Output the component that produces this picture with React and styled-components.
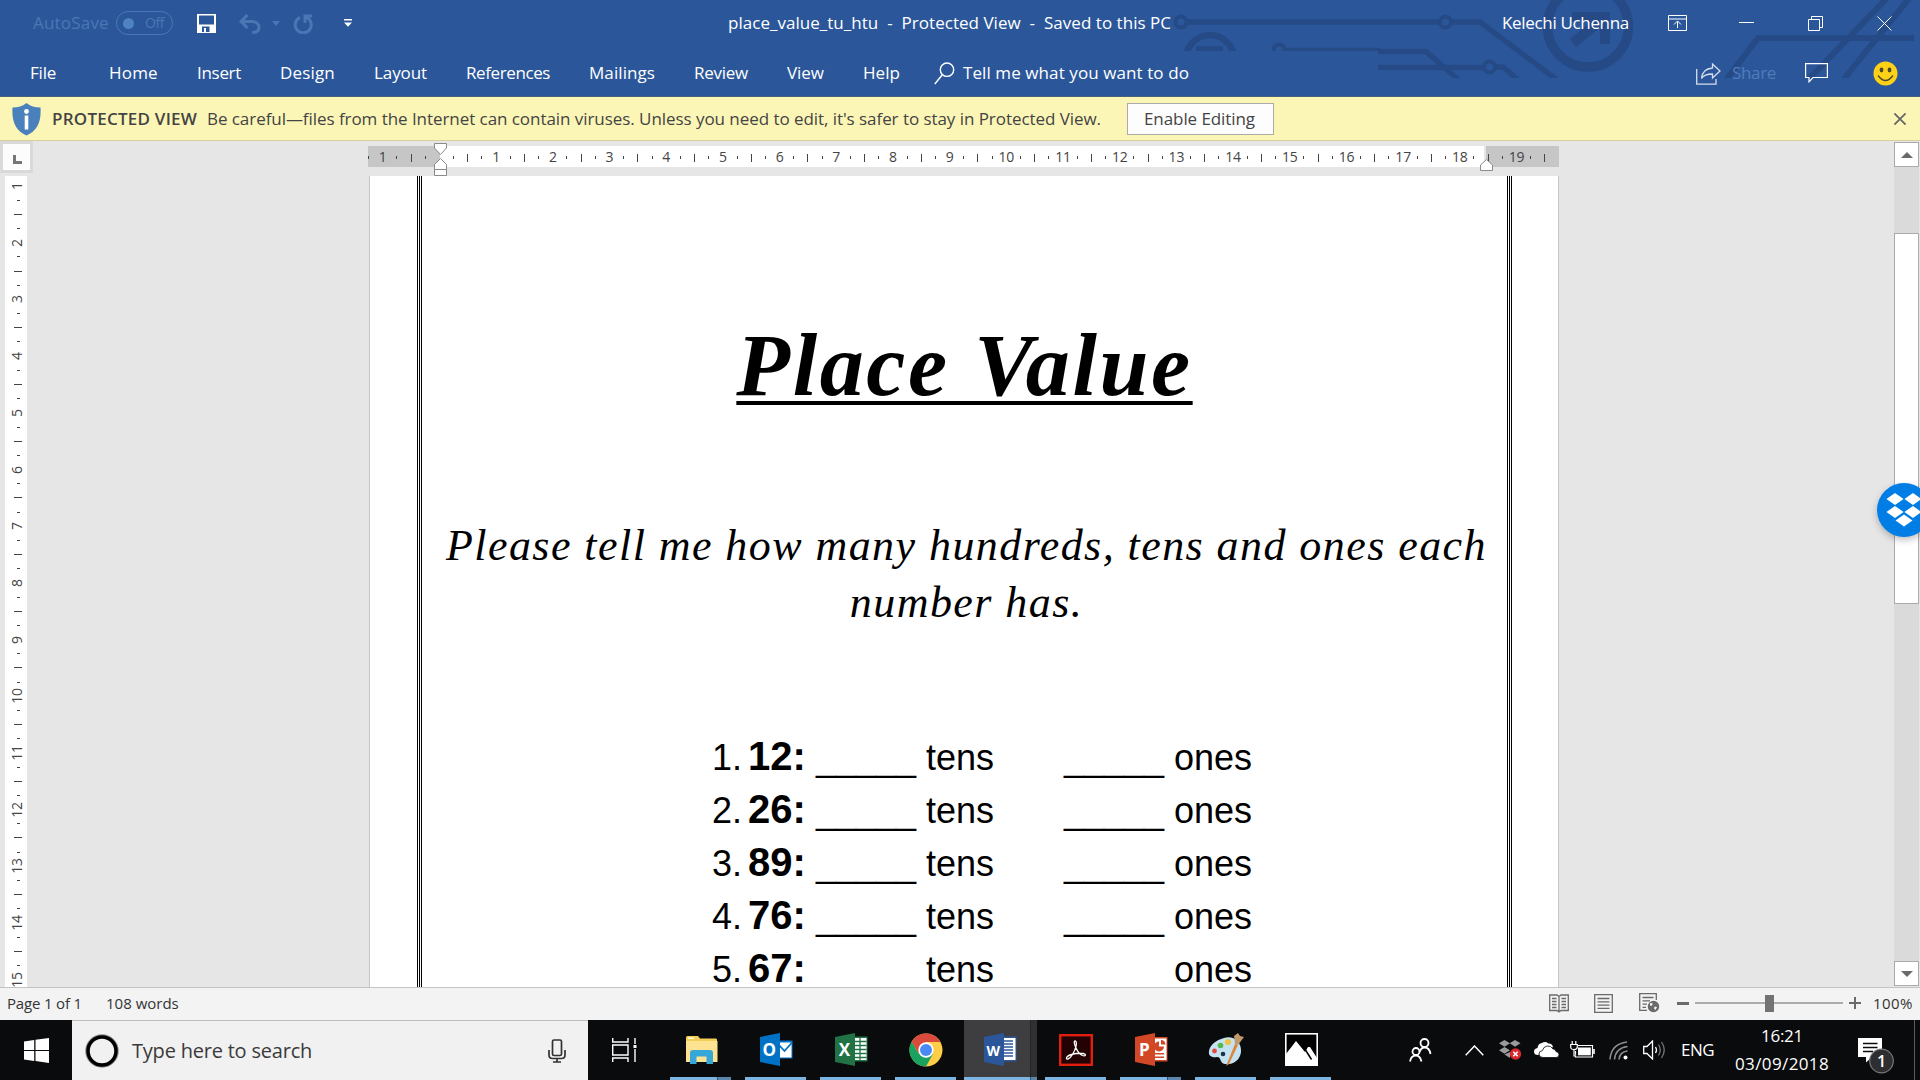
import React from "react";
import styled, { createGlobalStyle, css } from "styled-components";

const GlobalStyle = createGlobalStyle`
  *, *::before, *::after { box-sizing: border-box; }
  html, body { margin: 0; padding: 0; overflow: hidden; }
  body { font-family: "Segoe UI", "Open Sans", "Noto Sans", sans-serif; }
  svg { display: block; flex: none; }
`;

const Screen = styled.div`
  width: 1920px;
  height: 1080px;
  display: flex;
  flex-direction: column;
  overflow: hidden;
  background: #e6e6e6;
`;

/* Text run with a fixed box so neighbouring items never drift */
const Label = styled.span`
  flex: none;
  width: ${(p) => p.$w}px;
  margin-left: ${(p) => p.$gap || 0}px;
  font-size: ${(p) => p.$size || 17}px;
  letter-spacing: ${(p) => p.$ls || 0}px;
  font-weight: ${(p) => p.$weight || 400};
  color: ${(p) => p.$color || "inherit"};
  white-space: pre;
  line-height: ${(p) => p.$lh || 1.4};
`;

const IconSlot = styled.span`
  flex: none;
  display: flex;
  margin-left: ${(p) => p.$gap || 0}px;
  padding-top: ${(p) => p.$drop || 0}px;
`;

/* ---------- header ---------- */
const Header = styled.header`
  position: relative;
  flex: none;
  height: 97px;
  background: #2b579a;
  border-bottom: 1px solid #48607a;
  color: #fff;
`;

const Decor = styled.svg`
  position: absolute;
  left: 1160px;
  top: 0;
`;

const TitleRow = styled.div`
  position: relative;
  display: flex;
  align-items: center;
  height: 46px;
`;

const TabRow = styled.nav`
  position: relative;
  display: flex;
  align-items: center;
  height: 50px;
  padding-top: 4px;
`;

const Toggle = styled.span`
  flex: none;
  display: flex;
  align-items: center;
  width: 57px;
  height: 24px;
  margin-left: 7px;
  padding-left: 6px;
  border: 1px solid #4a77b4;
  border-radius: 12px;
`;

const ToggleDot = styled.span`
  width: 11px;
  height: 11px;
  border-radius: 50%;
  background: #4f83c0;
`;

/* ---------- message bar ---------- */
const MessageBar = styled.div`
  flex: none;
  display: flex;
  align-items: center;
  height: 44px;
  background: #fcf6b6;
  border-bottom: 1px solid #d5d09c;
  color: #444;
`;

const EnableButton = styled.button`
  flex: none;
  display: flex;
  align-items: center;
  width: 147px;
  height: 32px;
  margin-left: 26px;
  padding: 0 0 0 16px;
  border: 1px solid #ababab;
  background: #fdfdfd;
  color: #444;
  font-family: inherit;
`;

/* ---------- workspace ---------- */
const Workspace = styled.main`
  flex: none;
  display: flex;
  height: 847px;
  border-bottom: 1px solid #c3c3c3;
  background: #e6e6e6;
`;

const LeftRail = styled.div`
  display: flex;
  flex-direction: column;
  width: 33px;
`;

const TabSelector = styled.div`
  flex: none;
  height: 32px;
  padding: 3px;
  background: #d9d9d9;
`;

const TabSelectorFace = styled.div`
  display: flex;
  width: 27px;
  height: 26px;
  padding: 11px 0 0 10px;
  background: #fcfcfc;
`;

const VRuler = styled.div`
  flex: 1;
  width: 22px;
  margin: 3px 0 0 5px;
  padding-top: 3px;
  background: #fff;
  overflow: hidden;
`;

const VTick = styled.div`
  display: flex;
  align-items: center;
  justify-content: center;
  height: 14.175px;
  padding-left: 3px;
`;

const VNumber = styled.span`
  transform: rotate(-90deg);
  font-size: 14px;
  line-height: 14px;
  letter-spacing: ${(p) => (p.$wide ? "-0.3px" : 0)};
  margin-left: -1px;
  color: #444;
`;

const VMark = styled.span`
  width: ${(p) => (p.$long ? 8 : 3)}px;
  height: 1px;
  margin-left: ${(p) => (p.$long ? 0 : 1)}px;
  background: #444;
`;

const Canvas = styled.div`
  flex: 1;
  display: flex;
  flex-direction: column;
  padding: 5px 0 0 335px;
`;

const HRulerWrap = styled.div`
  position: relative;
  flex: none;
  width: 1191px;
  height: 21px;
  margin-bottom: 9px;
`;

const HRuler = styled.div`
  display: flex;
  height: 21px;
  overflow: hidden;
  background: linear-gradient(
    90deg,
    #c6c6c6 0 72px,
    #fff 72px 1116px,
    #e6e6e6 1116px 1118px,
    #c6c6c6 1118px
  );
`;

const HTick = styled.div`
  flex: none;
  display: flex;
  align-items: center;
  justify-content: center;
  width: 14.175px;
  padding-top: 1px;
  &:first-child { margin-left: -6.5px; }
`;

const HNumber = styled.span`
  font-size: 14px;
  line-height: 20px;
  letter-spacing: -0.2px;
  color: #444;
  white-space: nowrap;
`;

const HMark = styled.span`
  width: 1px;
  height: ${(p) => (p.$long ? 8 : 3)}px;
  margin-top: ${(p) => (p.$long ? 2 : 1)}px;
  background: #444;
`;

const Marker = styled.svg`
  position: absolute;
  left: ${(p) => p.$x}px;
  top: ${(p) => p.$y}px;
`;

const Page = styled.article`
  flex: 1;
  width: 1190px;
  margin-left: 1px;
  padding-left: 47px;
  min-height: 0;
  overflow: hidden;
  border-left: 1px solid #c6c6c6;
  border-right: 1px solid #c6c6c6;
  background: #fff;
  color: #000;
`;

const rule = css`linear-gradient(90deg, #000 0 1px, #fff 1px 2px, #000 2px 3px, #fff 3px 4px, #000 4px 5px)`;

const PageFrame = styled.div`
  width: 1095px;
  height: 840px;
  padding-top: 140px;
  background: ${rule} left top / 5px 100% no-repeat, ${rule} right top / 5px 100% no-repeat;
`;

const DocTitle = styled.h1`
  margin: 0 0 101px;
  text-align: center;
  font: italic 700 88px/100px "Lucida Calligraphy", "Liberation Serif", serif;
  letter-spacing: 2.6px;
  text-decoration: underline;
  text-decoration-thickness: 4px;
  text-underline-offset: 6px;
  text-decoration-skip-ink: none;
`;

const Instruction = styled.p`
  margin: 0 0 99px;
  padding-left: 4px;
  text-align: center;
  font: italic 400 44px/57px "Lucida Calligraphy", "Liberation Serif", serif;
  letter-spacing: 1.44px;
  white-space: pre-line;
`;

const Questions = styled.div`
  display: flex;
  flex-direction: column;
  padding-left: 295px;
  font-family: Arial, "Liberation Sans", sans-serif;
`;

const Question = styled.div`
  display: flex;
  align-items: baseline;
  height: 53px;
  font-size: 36px;
  line-height: 53px;
`;

const Cell = styled.span`
  flex: none;
  width: ${(p) => p.$w}px;
  font-size: ${(p) => (p.$bold ? 40 : 36)}px;
  font-weight: ${(p) => (p.$bold ? 700 : 400)};
`;

const Blank = styled(Cell)`
  transform: translateY(1px);
`;

/* ---------- scroll bar ---------- */
const ScrollBar = styled.div`
  display: flex;
  flex-direction: column;
  width: 26px;
  padding: 1px 1px 1px 0;
`;

const ScrollButton = styled.div`
  flex: none;
  display: flex;
  align-items: center;
  justify-content: center;
  height: 25px;
  border: 1px solid #ababab;
  background: #fff;
`;

const ScrollTrack = styled.div`
  flex: 1;
  padding-top: 66px;
  background: #dadada;
`;

const ScrollThumb = styled.div`
  height: 371px;
  border: 1px solid #ababab;
  background: #fff;
`;

const DropboxBadge = styled.div`
  position: absolute;
  left: 1877px;
  top: 483px;
  display: flex;
  align-items: center;
  justify-content: center;
  width: 54px;
  height: 54px;
  border-radius: 50%;
  background: #007ee5;
  box-shadow: 0 3px 7px rgba(0, 0, 0, 0.25);
`;

const BadgeClip = styled.div`
  position: absolute;
  left: 0;
  top: 0;
  width: 1920px;
  height: 1080px;
  overflow: hidden;
  pointer-events: none;
`;

/* ---------- status bar ---------- */
const StatusBar = styled.footer`
  flex: none;
  display: flex;
  align-items: center;
  height: 32px;
  padding-bottom: 2px;
  background: #f3f3f3;
  color: #333;
`;

const Spacer = styled.span`
  flex: 1;
`;

const Slider = styled.span`
  flex: none;
  display: flex;
  align-items: center;
  justify-content: center;
  width: 148px;
  height: 18px;
  margin: 0 6px;
  background: linear-gradient(#ababab, #ababab) center / 100% 2px no-repeat;
`;

const SliderThumb = styled.span`
  width: 9px;
  height: 17px;
  background: #737373;
`;

/* ---------- task bar ---------- */
const TaskBar = styled.div`
  flex: none;
  display: flex;
  height: 60px;
  background: #0a0b0d;
  color: #fff;
`;

const StartButton = styled.div`
  flex: none;
  display: flex;
  align-items: center;
  width: 72px;
  padding-left: 24px;
`;

const SearchBox = styled.div`
  flex: none;
  display: flex;
  align-items: center;
  width: 516px;
  padding-left: 13px;
  border-top: 1px solid #bdbdbd;
  background: #f1f1f1;
  color: #3a3a3a;
`;

const TaskItem = styled.div`
  flex: none;
  display: flex;
  flex-direction: column;
  align-items: center;
  width: 75px;
`;

const TaskIcon = styled.div`
  flex: 1;
  display: flex;
  align-items: center;
  justify-content: center;
  width: ${(p) => (p.$active ? 73 : 61)}px;
  padding: 2px ${(p) => (p.$active ? 1 : 0)}px 0 ${(p) => (p.$active ? 0 : 1)}px;
  background: ${(p) =>
    p.$active
      ? "linear-gradient(90deg, #3e3e40 0 66px, #242426 66px 67px, #303032 67px)"
      : "none"};
`;

const TaskLine = styled.div`
  flex: none;
  width: ${(p) => (p.$active ? 73 : 61)}px;
  height: 3px;
  background: ${(p) =>
    p.$stack
      ? `linear-gradient(90deg, #7cb4e2 0 ${p.$active ? 66 : 47}px, #36506a ${p.$active ? 66 : 47}px ${p.$active ? 67 : 48}px, #5a86ae ${p.$active ? 67 : 48}px)`
      : "#7cb4e2"};
`;

const TaskViewButton = styled.div`
  flex: none;
  display: flex;
  align-items: center;
  width: 75px;
  padding-left: 24px;
`;

const Tray = styled.div`
  flex: 1;
  display: flex;
  align-items: center;
`;

const Clock = styled.div`
  flex: none;
  display: flex;
  flex-direction: column;
  align-items: center;
  width: 94px;
  margin-left: 21px;
`;

const DesktopEdge = styled.span`
  flex: none;
  width: 1px;
  height: 60px;
  margin-left: 20px;
  background: #5d5d5f;
`;

/* ---------- drawings ---------- */
const CircuitDecor = () => (
  <Decor width="760" height="78" viewBox="1160 0 760 78" fill="none" stroke="#264a86" strokeWidth="5.5">
    <circle cx="1181" cy="22" r="5.5" strokeWidth="4" />
    <path d="M1187 22H1439" />
    <circle cx="1445.5" cy="22" r="5.5" strokeWidth="4" />
    <path d="M1452 22H1480L1557 80" />
    <g clipPath="url(#upper)">
      <circle cx="1210" cy="59" r="24" strokeWidth="6.5" />
      <path d="M1196 49H1223" />
      <circle cx="1279" cy="50" r="5.5" strokeWidth="4" />
      <path d="M1285 50.5H1380" />
    </g>
    <path d="M1378 51.5H1426L1461 82" />
    <path d="M1378 67.5H1483" />
    <circle cx="1489.500" cy="67" r="5.5" strokeWidth="4" />
    <path d="M1496 67H1503L1518 80" />
    <circle cx="1588" cy="26.500" r="40.500" strokeWidth="9.5" />
    <path d="M1572 17H1605V44M1605 17L1573 43" strokeWidth="10" />
    <path d="M1914 38H1758L1726 80" strokeWidth="6" />
    <path d="M1889 -4L1808 80M1911 -4L1843 80" strokeWidth="6" />
    <clipPath id="upper"><rect x="1160" y="0" width="220" height="51" /></clipPath>
  </Decor>
);

const SaveIcon = () => (
  <svg width="19" height="19" viewBox="0 0 19 19">
    <path fillRule="evenodd" fill="#fff" d="M0 0H19V19H0ZM2 1.500V10.500H17V1.500ZM5 12.500V18H7V14H9V18H12.500V12.500Z" />
  </svg>
);

const UndoIcon = () => (
  <svg width="22" height="20" viewBox="0 0 22 20" fill="none" stroke="#4a77b4" strokeWidth="3">
    <path d="M8.500 1L2 7.500L8.500 14M2.500 7.500H13C18 7.500 20 10.500 20 13.500C20 16.500 18 18.500 13 18.500" />
  </svg>
);

const RedoIcon = () => (
  <svg width="20" height="20" viewBox="0 0 20 20" fill="none" stroke="#4a77b4" strokeWidth="3">
    <path d="M7 3.500A8 8 0 1 0 13.500 3.500M12 9V2H19" />
  </svg>
);

const QatIcon = () => (
  <svg width="8" height="8" viewBox="0 0 8 8" fill="#fff">
    <rect width="8" height="1.500" /><path d="M0 3.500H8L4 7.800Z" />
  </svg>
);

const RibbonIcon = () => (
  <svg width="19" height="16" viewBox="0 0 19 16" fill="none" stroke="#fff">
    <path d="M.5 .5H18.500V15.500H.5ZM.5 4H18.500M9.500 13V6.500M6 9.500L9.500 6L13 9.500" />
  </svg>
);

const MinimizeIcon = () => (
  <svg width="15" height="2" viewBox="0 0 15 2"><rect width="15" height="1" fill="#fff" /></svg>
);

const RestoreIcon = () => (
  <svg width="15" height="15" viewBox="0 0 15 15" fill="none" stroke="#fff">
    <path d="M.5 3.500H11.500V14.500H.5ZM3.500 3V.5H14.500V11.500H12" />
  </svg>
);

const CloseIcon = ({ size = 15, color = "#fff", stroke = 1 }) => (
  <svg width={size} height={size} viewBox="0 0 15 15" fill="none" stroke={color} strokeWidth={stroke}>
    <path d="M.5 .5L14.500 14.500M14.500 .5L.5 14.500" />
  </svg>
);

const SearchIcon = () => (
  <svg width="21" height="23" viewBox="0 0 21 23" fill="none" stroke="#fff" strokeWidth="1.4">
    <circle cx="13" cy="7.700" r="6.700" /><path d="M8.300 12.700L.8 22" />
  </svg>
);

const ShareIcon = () => (
  <svg width="25" height="22" viewBox="0 0 25 22" fill="none" stroke="#d5deec" strokeWidth="1.300">
    <path d="M.7 6V21.200H20V16" />
    <path d="M16.500 1L24 8L16.500 15V11C11 11 7.500 12 5.500 15.500C6 9.500 10 5.500 16.500 5Z" />
  </svg>
);

const CommentIcon = () => (
  <svg width="23" height="20" viewBox="0 0 23 20" fill="none" stroke="#fff" strokeWidth="1.200">
    <path d="M.6 .6H22.400V14.500H8L4 18.800V14.500H.6Z" />
  </svg>
);

const SmileIcon = () => (
  <svg width="25" height="25" viewBox="0 0 25 25">
    <circle cx="12.500" cy="12.500" r="12" fill="#fcd116" />
    <ellipse cx="8.500" cy="9" rx="1.900" ry="2.400" fill="#4b4a30" />
    <ellipse cx="16.500" cy="9" rx="1.900" ry="2.400" fill="#4b4a30" />
    <path d="M5 14.500Q12.500 24.500 20 14.500" fill="none" stroke="#4b4a30" strokeWidth="1.300" />
  </svg>
);

const ShieldIcon = () => (
  <svg width="29" height="33" viewBox="0 0 29 33">
    <path d="M14.500 0C18 3 23 4.500 28.500 4.500C29.500 19 25 28 14.500 32.500C4 28 -.5 19 .5 4.500C6 4.500 11 3 14.500 0Z" fill="#4a80bb" />
    <circle cx="14.500" cy="8.500" r="2.400" fill="#fff" />
    <rect x="12.700" y="12.500" width="3.600" height="14" fill="#fff" />
  </svg>
);

const Dropbox = ({ size, color }) => (
  <svg width={size} height={size * 0.93} viewBox="0 0 36 33.500" fill={color}>
    <path d="M9 0L17.600 6L9 12L.4 6ZM27 0L35.600 6L27 12L18.400 6ZM9 13L17.600 19L9 25L.4 19ZM27 13L35.600 19L27 25L18.400 19ZM18 21.500L26.500 27.500L18 33.500L9.500 27.500Z" />
  </svg>
);

const ReadIcon = () => (
  <svg width="20" height="19" viewBox="0 0 20 19" fill="none" stroke="#6a6a6a" strokeWidth="1.300">
    <path d="M.7 1H8L10 2.500L12 1H19.300V16.500H12L10 18L8 16.500H.7ZM10 2V18M3 4.500H7.500M3 7.500H7.500M3 10.500H7.500M3 13.500H7.500M12.500 4.500H17M12.500 7.500H17M12.500 10.500H17M12.500 13.500H17" />
  </svg>
);

const PrintIcon = () => (
  <svg width="19" height="19" viewBox="0 0 19 19" fill="none" stroke="#6a6a6a" strokeWidth="1.300">
    <path d="M.7 .7H18.300V18.300H.7ZM3.500 4.500H15.500M3.500 7.800H15.500M3.500 11.100H15.500M3.500 14.400H15.500" />
  </svg>
);

const WebIcon = () => (
  <svg width="21" height="20" viewBox="0 0 21 20" fill="none" stroke="#6a6a6a" strokeWidth="1.300">
    <path d="M8 17.300H.7V.7H17.300V7M3.500 4.500H14.500M3.500 7.800H11M3.500 11.100H8M3.500 14.400H7" />
    <circle cx="14.500" cy="13.500" r="5.700" fill="#6a6a6a" stroke="none" />
    <path d="M11 10L14 10.500L12.500 13L11 12.500ZM15.500 13.500L18 14L16.500 17L15 15.500Z" fill="#f3f3f3" stroke="none" />
  </svg>
);

const WindowsLogo = () => (
  <svg width="25" height="25" viewBox="0 0 25 25" fill="#fff">
    <path d="M0 3.500L10.200 2V12H0ZM11.500 1.800L25 0V12H11.500ZM0 13H10.200V23L0 21.500ZM11.500 13H25V25L11.500 23.100Z" />
  </svg>
);

const CortanaIcon = () => (
  <svg width="34" height="34" viewBox="0 0 34 34" fill="none">
    <circle cx="17" cy="17" r="15" stroke="#8a8a8a" strokeWidth="3.500" />
    <circle cx="17" cy="17" r="14" stroke="#000" strokeWidth="3.500" />
  </svg>
);

const MicIcon = () => (
  <svg width="18" height="24" viewBox="0 0 18 24" fill="none" stroke="#333" strokeWidth="1.700">
    <rect x="4.500" y="1" width="9" height="15.500" rx="1.500" />
    <path d="M1 11V16Q1 19.500 4.500 19.500H13.500Q17 19.500 17 16V11M9 19.500V23M5 23H13" />
  </svg>
);

const TaskViewIcon = () => (
  <svg width="25" height="24" viewBox="0 0 25 24" fill="none" stroke="#fff" strokeWidth="1.400">
    <path d="M.7 0V4H16V0M.7 24V20H16V24M.7 7H16V17H.7ZM23 0V6M23 11V24" />
    <rect x="21.500" y="7" width="3" height="3" fill="#fff" stroke="none" />
  </svg>
);

const FolderIcon = () => (
  <svg width="33" height="28" viewBox="0 0 33 28">
    <path d="M1 1.500Q1 0 2.500 0H13L15 2.500H31Q32 2.500 32 4V25H1Z" fill="#f4cf58" />
    <path d="M3 1.500H9V3H3Z" fill="#fffbe0" />
    <path d="M1 5H32.500V26H1Z" fill="#fde391" />
    <path d="M5 28V17Q5 14 8 14H25Q28 14 28 17V28H21.500V20.500H11.500V28Z" fill="#35a7d8" />
  </svg>
);

const OfficeIcon = ({ color, letter, size = 17, children }) => (
  <svg width="33" height="33" viewBox="0 0 33 33">
    {children}
    <path d="M0 4L20 0V33L0 29Z" fill={color} />
    <text x="9.300" y="22.500" textAnchor="middle" fontFamily="Open Sans, sans-serif" fontWeight="700" fontSize={size} fill="#fff">{letter}</text>
  </svg>
);

const OutlookIcon = () => (
  <OfficeIcon color="#0072c6" letter="O">
    <rect x="17" y="7.500" width="15.500" height="18" fill="#0072c6" />
    <rect x="18" y="9.500" width="13.500" height="15" fill="#fff" />
    <path d="M19 12L24.500 18L32 9.500" fill="none" stroke="#0072c6" strokeWidth="1.800" />
  </OfficeIcon>
);

const ExcelIcon = () => (
  <OfficeIcon color="#217346" letter="X">
    <rect x="17" y="3.500" width="15.500" height="25" fill="#217346" />
    <rect x="18" y="5" width="13.500" height="22" fill="#fff" />
    <path d="M20 8.500H31.500M20 12.500H31.500M20 16.500H31.500M20 20.500H31.500M20 24.500H31.500M25 5V27" stroke="#217346" strokeWidth="1.300" />
  </OfficeIcon>
);

const WordIcon = () => (
  <OfficeIcon color="#2b579a" letter="W" size={14}>
    <rect x="17" y="3.500" width="15.500" height="25" fill="#2b579a" />
    <rect x="18" y="5" width="13.500" height="22" fill="#fff" />
    <path d="M20 8H29M20 11H29M20 14H29M20 17H29M20 20H29M20 23H29" stroke="#2b579a" strokeWidth="1.500" />
  </OfficeIcon>
);

const PowerPointIcon = () => (
  <OfficeIcon color="#d24726" letter="P">
    <rect x="17" y="4" width="15.500" height="24.500" fill="#d24726" />
    <rect x="18" y="5.500" width="13.500" height="21.500" fill="#fff" />
    <path d="M24 8.500A5 5 0 1 0 29 13.500H24ZM26 7V11.500H30.500A4.500 4.500 0 0 0 26 7ZM19 20H29V21.500H19ZM19 23.500H29V25H19Z" fill="#d24726" />
  </OfficeIcon>
);

const ChromeIcon = () => (
  <svg width="34" height="34" viewBox="0 0 34 34">
    <circle cx="17" cy="17" r="16.500" fill="#ffcd46" />
    <path d="M2.700 8.700A16.500 16.500 0 0 1 31.400 9H17L9.900 21Z" fill="#db4a3e" />
    <path d="M9.900 21L2.700 8.700A16.500 16.500 0 0 0 17 33.500L24 21Z" fill="#1aa260" />
    <circle cx="17" cy="17" r="7.700" fill="#fff" />
    <circle cx="17" cy="17" r="6" fill="#4a8af4" />
  </svg>
);

const AcrobatIcon = () => (
  <svg width="34" height="32" viewBox="0 0 34 32">
    <rect x="1.200" y="1.200" width="31.600" height="29.600" fill="#240203" stroke="#e11f0e" strokeWidth="2.400" />
    <path d="M16 7C18.500 7 17.500 14 13.500 20.500C10.500 25.500 7 26 7.500 24C8.200 21 17 18.500 24 19.500C28 20.300 26.500 22.500 23.500 21.500C18 19.500 13.500 7 16 7Z" fill="none" stroke="#fff" strokeWidth="1.300" />
  </svg>
);

const PaintIcon = () => (
  <svg width="36" height="34" viewBox="0 0 36 34">
    <path d="M16 5C25 2 34 9 33 19C32 28 24 32 17 31C11 30 14 24 9 24C4 25 0 23 1 18C2 12 8 7 16 5Z" fill="#c4e2f2" />
    <circle cx="15" cy="21" r="2.300" fill="#17334a" />
    <circle cx="6.500" cy="18" r="2.400" fill="#e2493f" />
    <circle cx="12.500" cy="12.500" r="2.800" fill="#56b848" />
    <circle cx="20" cy="9" r="3" fill="#f3c33c" />
    <path d="M18 33L27 11L30 12L21 31Z" fill="#d8873b" />
    <path d="M27 11L26 3L30 0L32 3L36 4L30 12Z" fill="#c09a6a" />
  </svg>
);

const PhotosIcon = () => (
  <svg width="33" height="33" viewBox="0 0 33 33">
    <rect x=".8" y=".8" width="31.400" height="31.400" fill="#000" stroke="#fff" strokeWidth="1.600" />
    <path d="M1 21L11 8L20 19L23 14L25 14L32 25V32H1Z" fill="#fff" />
    <path d="M20.500 17L26.500 26.500" stroke="#000" strokeWidth="1.500" />
  </svg>
);

const PeopleIcon = () => (
  <svg width="23" height="24" viewBox="0 0 23 24" fill="none" stroke="#fff" strokeWidth="1.800">
    <circle cx="15.500" cy="5" r="4" /><path d="M10.500 14Q12 9.500 15.500 9.500Q20.500 9.500 21.500 16" />
    <circle cx="7" cy="13.500" r="3.500" /><path d="M1 23.500Q2 17.500 7 17.500Q11 17.500 12.500 23.500" />
  </svg>
);

const ChevronUp = () => (
  <svg width="19" height="11" viewBox="0 0 19 11" fill="none" stroke="#fff" strokeWidth="1.500"><path d="M.7 10.200L9.500 1L18.300 10.200" /></svg>
);

const DropboxTray = () => (
  <svg width="23" height="20" viewBox="0 0 23 20">
    <path fill="#9b9b9b" d="M5.500 0L11 3.300L5.500 6.700L0 3.300ZM16 0L21.500 3.300L16 6.700L10.700 3.300ZM5.500 7L11 10.300L5.500 13.700L0 10.300ZM11 12L11 18L5.500 14.500Z" />
    <circle cx="16.500" cy="14" r="5.700" fill="#d9272e" />
    <path d="M14.300 11.800L18.700 16.200M18.700 11.800L14.300 16.200" stroke="#fff" strokeWidth="1.600" />
  </svg>
);

const CloudIcon = () => (
  <svg width="25" height="16" viewBox="0 0 25 16">
    <path d="M4 13Q0 13 0 9.500Q0 6.500 3.500 6Q4 1.500 8 1Q11 -1 14.500 1.500Q18 1 19 5" fill="#fff" />
    <path d="M9 15.500Q5 15.500 5 12Q5 9 8.500 8.500Q9 5 13 4Q17 3.500 19 7Q21 6.500 22 9.500Q25 10 25 12.700Q25 15.500 22 15.500Z" fill="#fff" stroke="#0a0b0d" strokeWidth=".8" />
  </svg>
);

const BatteryIcon = () => (
  <svg width="25" height="18" viewBox="0 0 25 18" fill="none" stroke="#fff" strokeWidth="1.200">
    <path d="M8 4.500H22.500V16H5.500V10" />
    <rect x="8" y="6.500" width="12.800" height="7.800" fill="#fff" stroke="none" />
    <path d="M2.200 0V3M5.800 0V3M.7 3.500H7.300V6Q7.300 8.500 4 8.500Q.7 8.500 .7 6ZM4 8.500V15H5.500" fill="#0a0b0d" />
    <path d="M24 8V13" strokeWidth="1.600" />
  </svg>
);

const WifiIcon = () => (
  <svg width="20" height="19" viewBox="0 0 20 19" fill="none" stroke="#8f8f8f" strokeWidth="1.500">
    <path d="M1 18.500Q2 3 18 1M5.500 18.500Q6.500 7 18.500 5.500M10 18.500Q10.500 11 18.500 10" />
    <circle cx="16.500" cy="16.500" r="2" fill="#fff" stroke="none" />
  </svg>
);

const SpeakerIcon = () => (
  <svg width="23" height="20" viewBox="0 0 23 20" fill="none" stroke="#fff" strokeWidth="1.300">
    <path d="M.7 6.500H4L9.500 1V19L4 13.500H.7Z" />
    <path d="M12.500 7Q14.500 10 12.500 13" />
    <path d="M15.500 4.500Q19 10 15.500 15.500M18.500 2Q24 10 18.500 18" stroke="#777" />
  </svg>
);

const NotificationIcon = () => (
  <svg width="36" height="37" viewBox="0 0 36 37">
    <path d="M0 0H24V19H14L8 24.500V19H0Z" fill="#fff" />
    <path d="M5 5.500H19.500M5 9.500H19.500M5 13.500H15" stroke="#0a0b0d" strokeWidth="1.300" />
    <circle cx="23.500" cy="23" r="11.800" fill="#2e2e30" stroke="#77777a" strokeWidth="1.200" />
    <text x="23.500" y="28.500" textAnchor="middle" fontFamily="Open Sans, sans-serif" fontWeight="600" fontSize="16" fill="#fff">1</text>
  </svg>
);

/* ---------- data ---------- */
const TABS = [
  { text: "File", w: 26, gap: 30, ls: -0.2 },
  { text: "Home", w: 49, gap: 53, ls: 0.2 },
  { text: "Insert", w: 44, gap: 39, ls: -0.3 },
  { text: "Design", w: 55, gap: 39, ls: 0.17 },
  { text: "Layout", w: 53, gap: 39, ls: -0.08 },
  { text: "References", w: 84, gap: 39, ls: -0.4 },
  { text: "Mailings", w: 66, gap: 39, ls: 0.08 },
  { text: "Review", w: 54, gap: 39, ls: -0.26 },
  { text: "View", w: 37, gap: 39, ls: -0.05 },
  { text: "Help", w: 37, gap: 39, ls: 0.05 },
];

const QUESTIONS = [12, 26, 89, 76, 67];

const TASKS = [
  { Icon: FolderIcon, stack: true },
  { Icon: OutlookIcon },
  { Icon: ExcelIcon },
  { Icon: ChromeIcon },
  { Icon: WordIcon, active: true, stack: true },
  { Icon: AcrobatIcon },
  { Icon: PowerPointIcon, stack: true },
  { Icon: PaintIcon },
  { Icon: PhotosIcon },
];

/* Quarter-centimetre marks, from -1.25 cm to 19.5 cm */
const H_TICKS = Array.from({ length: 84 }, (_, i) => i - 5);
const V_TICKS = Array.from({ length: 58 }, (_, i) => i + 4);

export default function App() {
  return (
    <Screen>
      <GlobalStyle />
      <Header>
        <CircuitDecor />
        <TitleRow>
          <Label $w={76} $gap={33} $ls={0.2} $color="#4a77b4">AutoSave</Label>
          <Toggle>
            <ToggleDot />
            <Label $w={19} $gap={11} $size={14} $ls={-0.4} $color="#4a77b4">Off</Label>
          </Toggle>
          <IconSlot $gap={24}><SaveIcon /></IconSlot>
          <IconSlot $gap={23} $drop={2}><UndoIcon /></IconSlot>
          <IconSlot $gap={11}>
            <svg width="8" height="5" viewBox="0 0 8 5" fill="#4a77b4"><path d="M0 0H8L4 5Z" /></svg>
          </IconSlot>
          <IconSlot $gap={13} $drop={1}><RedoIcon /></IconSlot>
          <IconSlot $gap={31}><QatIcon /></IconSlot>
          <Label $w={443} $gap={376} $ls={0.03}>{"place_value_tu_htu  -  Protected View  -  Saved to this PC"}</Label>
          <Label $w={127} $gap={331} $ls={-0.33}>Kelechi Uchenna</Label>
          <IconSlot $gap={39}><RibbonIcon /></IconSlot>
          <IconSlot $gap={52}><MinimizeIcon /></IconSlot>
          <IconSlot $gap={54}><RestoreIcon /></IconSlot>
          <IconSlot $gap={54}><CloseIcon /></IconSlot>
        </TitleRow>
        <TabRow>
          {TABS.map((t) => (
            <Label key={t.text} $w={t.w} $gap={t.gap} $ls={t.ls}>{t.text}</Label>
          ))}
          <IconSlot $gap={34}><SearchIcon /></IconSlot>
          <Label $w={226} $gap={8} $ls={0.09}>Tell me what you want to do</Label>
          <Spacer />
          <IconSlot $drop={2}><ShareIcon /></IconSlot>
          <Label $w={44} $gap={11} $ls={-0.33} $color="#4f7cba">Share</Label>
          <IconSlot $gap={29}><CommentIcon /></IconSlot>
          <IconSlot $gap={45}><SmileIcon /></IconSlot>
          <IconSlot $gap={22} />
        </TabRow>
      </Header>

      <MessageBar>
        <IconSlot $gap={12} $drop={2}><ShieldIcon /></IconSlot>
        <Label $w={145} $gap={11} $ls={0.23} $weight={600}>PROTECTED VIEW</Label>
        <Label $w={894} $gap={10} $ls={-0.055}>
          Be careful—files from the Internet can contain viruses. Unless you need to edit, it's safer to stay in Protected View.
        </Label>
        <EnableButton><Label $w={111} $ls={-0.08}>Enable Editing</Label></EnableButton>
        <Spacer />
        <CloseIcon size={12} color="#666" stroke={2.200} />
        <IconSlot $gap={14} />
      </MessageBar>

      <Workspace>
        <LeftRail>
          <TabSelector>
            <TabSelectorFace>
              <svg width="9" height="9" viewBox="0 0 9 9" fill="#777"><path d="M0 0H3V6H9V9H0Z" /></svg>
            </TabSelectorFace>
          </TabSelector>
          <VRuler>
            {V_TICKS.map((t) => (
              <VTick key={t}>
                {t % 4 === 0 ? <VNumber $wide={t > 39}>{t / 4}</VNumber> : <VMark $long={t % 2 === 0} />}
              </VTick>
            ))}
          </VRuler>
        </LeftRail>

        <Canvas>
          <HRulerWrap>
            <HRuler>
              {H_TICKS.map((t) => (
                <HTick key={t}>
                  {t === 0 ? null : t % 4 === 0 ? <HNumber>{Math.abs(t / 4)}</HNumber> : <HMark $long={t % 2 === 0} />}
                </HTick>
              ))}
            </HRuler>
            <Marker $x={66} $y={-3} width="13" height="33" viewBox="0 0 13 33" fill="#fff" stroke="#8a8a8a">
              <path d="M.5 .5H12.500V5L6.500 11.500L.5 5ZM.5 21.500L6.500 15.500L12.500 21.500V32.500H.5ZM.5 26.500H12.500" />
            </Marker>
            <Marker $x={1112} $y={13} width="13" height="12" viewBox="0 0 13 12" fill="#fff" stroke="#8a8a8a">
              <path d="M.5 11.500V6L6.500 .5L12.500 6V11.500Z" />
            </Marker>
          </HRulerWrap>
          <Page>
            <PageFrame>
              <DocTitle>Place Value</DocTitle>
              <Instruction>{"Please tell me how many hundreds, tens and ones each\nnumber has."}</Instruction>
              <Questions>
                {QUESTIONS.map((n, i) => (
                  <Question key={n}>
                    <Cell $w={36}>{i + 1}.</Cell>
                    <Cell $w={68} $bold>{n}:</Cell>
                    <Blank $w={110}>_____</Blank>
                    <Cell $w={138}>tens</Cell>
                    <Blank $w={110}>_____</Blank>
                    <Cell $w={80}>ones</Cell>
                  </Question>
                ))}
              </Questions>
            </PageFrame>
          </Page>
        </Canvas>

        <ScrollBar>
          <ScrollButton><svg width="12" height="6" viewBox="0 0 12 6" fill="#6a6a6a"><path d="M0 6L6 0L12 6Z" /></svg></ScrollButton>
          <ScrollTrack><ScrollThumb /></ScrollTrack>
          <ScrollButton><svg width="12" height="6" viewBox="0 0 12 6" fill="#6a6a6a"><path d="M0 0L6 6L12 0Z" /></svg></ScrollButton>
        </ScrollBar>
      </Workspace>

      <StatusBar>
        <Label $w={75} $gap={7} $size={15} $ls={-0.17}>Page 1 of 1</Label>
        <Label $w={73} $gap={24} $size={15}>108 words</Label>
        <Spacer />
        <ReadIcon />
        <IconSlot $gap={25}><PrintIcon /></IconSlot>
        <IconSlot $gap={26}><WebIcon /></IconSlot>
        <IconSlot $gap={17}><svg width="12" height="3"><rect width="12" height="3" fill="#6a6a6a" /></svg></IconSlot>
        <Slider><SliderThumb /></Slider>
        <IconSlot><svg width="12" height="12" viewBox="0 0 12 12"><path d="M0 5H5V0H7V5H12V7H7V12H5V7H0Z" fill="#6a6a6a" /></svg></IconSlot>
        <Label $w={40} $gap={12} $size={15} $ls={0.4}>100%</Label>
        <IconSlot $gap={7} />
      </StatusBar>

      <TaskBar>
        <StartButton><WindowsLogo /></StartButton>
        <SearchBox>
          <CortanaIcon />
          <Label $w={180} $gap={13} $size={20} $ls={-0.21}>Type here to search</Label>
          <IconSlot $gap={236}><MicIcon /></IconSlot>
        </SearchBox>
        <TaskViewButton><TaskViewIcon /></TaskViewButton>
        {TASKS.map(({ Icon, active, stack }, i) => (
          <TaskItem key={i}>
            <TaskIcon $active={active}><Icon /></TaskIcon>
            <TaskLine $active={active} $stack={stack} />
          </TaskItem>
        ))}
        <Tray>
          <IconSlot $gap={71}><PeopleIcon /></IconSlot>
          <IconSlot $gap={33}><ChevronUp /></IconSlot>
          <IconSlot $gap={15}><DropboxTray /></IconSlot>
          <IconSlot $gap={12}><CloudIcon /></IconSlot>
          <IconSlot $gap={11}><BatteryIcon /></IconSlot>
          <IconSlot $gap={14}><WifiIcon /></IconSlot>
          <IconSlot $gap={14}><SpeakerIcon /></IconSlot>
          <Label $w={33} $gap={15} $ls={-0.5}>ENG</Label>
          <Clock>
            <Label $w={42} $ls={-0.27} $lh="28px">16:21</Label>
            <Label $w={94} $ls={0.38} $lh="28px">03/09/2018</Label>
          </Clock>
          <IconSlot $gap={29} $drop={13}><NotificationIcon /></IconSlot>
          <DesktopEdge />
        </Tray>
      </TaskBar>

      <BadgeClip>
        <DropboxBadge><Dropbox size={36} color="#fff" /></DropboxBadge>
      </BadgeClip>
    </Screen>
  );
}
